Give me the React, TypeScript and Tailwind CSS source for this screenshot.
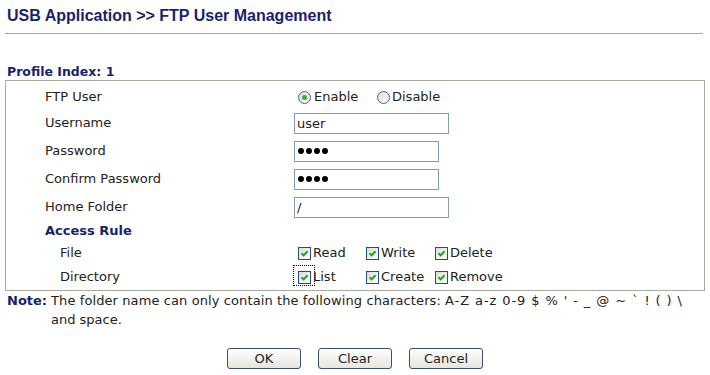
import React from "react";

const navy = "text-[#1a1f6e]";

const CheckBox = () => (
  <span className="relative inline-flex h-[13px] w-[13px] shrink-0 items-center justify-center border border-[#1c5180] bg-linear-to-br from-[#dcdcd7] to-white">
    <svg width="9" height="9" viewBox="0 0 9 9">
      <path d="M1.5 4.2 L3.6 6.4 L7.6 2.2" fill="none" stroke="#21a121" strokeWidth="2" />
    </svg>
  </span>
);

const Radio = ({ checked }: { checked?: boolean }) => (
  <span className="inline-flex h-[13px] w-[13px] shrink-0 items-center justify-center rounded-full border border-[#4a6280] bg-linear-to-br from-[#dcdcd7] to-white">
    {checked && <span className="h-[5px] w-[5px] rounded-full bg-[#3fa83f]" />}
  </span>
);

const Dots = () => (
  <div className="flex h-[21px] w-[145px] items-center gap-[2px] border border-[#7f9db9] bg-white pl-[3px]">
    <span className="h-[6px] w-[6px] rounded-full bg-black" />
    <span className="h-[6px] w-[6px] rounded-full bg-black" />
    <span className="h-[6px] w-[6px] rounded-full bg-black" />
    <span className="h-[6px] w-[6px] rounded-full bg-black" />
  </div>
);

const Field = ({ value }: { value: string }) => (
  <input
    readOnly
    value={value}
    className="h-[21px] w-[155px] border border-[#7f9db9] bg-white px-[2px] text-[13px] text-[#222] outline-none"
  />
);

function Row({ label, sub, height, children }: { label: string; sub?: boolean; height: string; children?: React.ReactNode }) {
  return (
    <div className={`flex items-center ${height}`}>
      <div className={sub ? "w-[288px] pl-[54px]" : "w-[288px] pl-[39px]"}>{label}</div>
      <div className="flex items-center">{children}</div>
    </div>
  );
}

const Opt = ({ label, focus }: { label: string; focus?: boolean }) => (
  <div className="relative flex h-full items-center">
    <span className="ml-[4px] flex">
      <CheckBox />
    </span>
    <span className="ml-[2px]">{label}</span>
    {focus && <span className="absolute left-[-1px] top-0 h-[21px] w-[22px] border border-dotted border-black" />}
  </div>
);

const Btn = ({ label }: { label: string }) => (
  <button className="h-[21px] w-[74px] rounded-[3px] border border-[#3c4f68] bg-linear-to-b from-white to-[#e6e5de] text-[13px] leading-none text-[#222]">
    {label}
  </button>
);

export default function App() {
  return (
    <div className="h-[375px] w-[710px] bg-white font-['DejaVu_Sans',sans-serif] text-[13px] text-[#222]">
      <h1 className={`pl-[7px] pt-[5px] font-['Liberation_Sans',Arial,sans-serif] text-[16px] font-bold leading-[22px] ${navy}`}>
        USB Application &gt;&gt; FTP User Management
      </h1>
      <div className="ml-[5px] mt-[6px] w-[698px] border-t border-[#a5a5a5]" />

      <div className={`mt-[30px] pl-[7px] text-[12.5px] font-bold leading-[16px] ${navy}`}>Profile Index: 1</div>

      <div className="ml-[5px] w-[700px] border border-[#aaa9a0] pb-[1px] pt-[4px]">
        <Row label="FTP User" height="h-[24px]">
          <div className="flex w-[79px] items-center">
            <span className="ml-[4px] flex">
              <Radio checked />
            </span>
            <span className="ml-[3px]">Enable</span>
          </div>
          <span className="ml-[4px] flex">
            <Radio />
          </span>
          <span className="ml-[2px]">Disable</span>
        </Row>
        <Row label="Username" height="h-[28px]">
          <Field value="user" />
        </Row>
        <Row label="Password" height="h-[28px]">
          <Dots />
        </Row>
        <Row label="Confirm Password" height="h-[28px]">
          <Dots />
        </Row>
        <Row label="Home Folder" height="h-[28px]">
          <Field value="/" />
        </Row>
        <div className={`flex h-[20px] items-center pl-[39px] font-bold ${navy}`}>Access Rule</div>
        <Row label="File" sub height="h-[24px]">
          <div className="grid h-[24px] grid-cols-[68px_69px_90px]">
            <Opt label="Read" />
            <Opt label="Write" />
            <Opt label="Delete" />
          </div>
        </Row>
        <Row label="Directory" sub height="h-[24px]">
          <div className="grid h-[24px] grid-cols-[68px_69px_90px]">
            <Opt label="List" focus />
            <Opt label="Create" />
            <Opt label="Remove" />
          </div>
        </Row>
      </div>

      <div className="flex pl-[7px] leading-[19px]">
        <div className={`w-[44px] shrink-0 font-bold ${navy}`}>Note:</div>
        <div className="w-[655px]">
          <span className="tracking-[0.1px]">The folder name can only contain the following characters:</span>{" "}
          <span className="tracking-[0.9px]">A-Z a-z 0-9 $ % ' - _ @ ~ ` ! ( ) \</span>
          <br />
          and space.
        </div>
      </div>

      <div className="mt-[19px] flex justify-center gap-[17px]">
        <Btn label="OK" />
        <Btn label="Clear" />
        <Btn label="Cancel" />
      </div>
    </div>
  );
}
